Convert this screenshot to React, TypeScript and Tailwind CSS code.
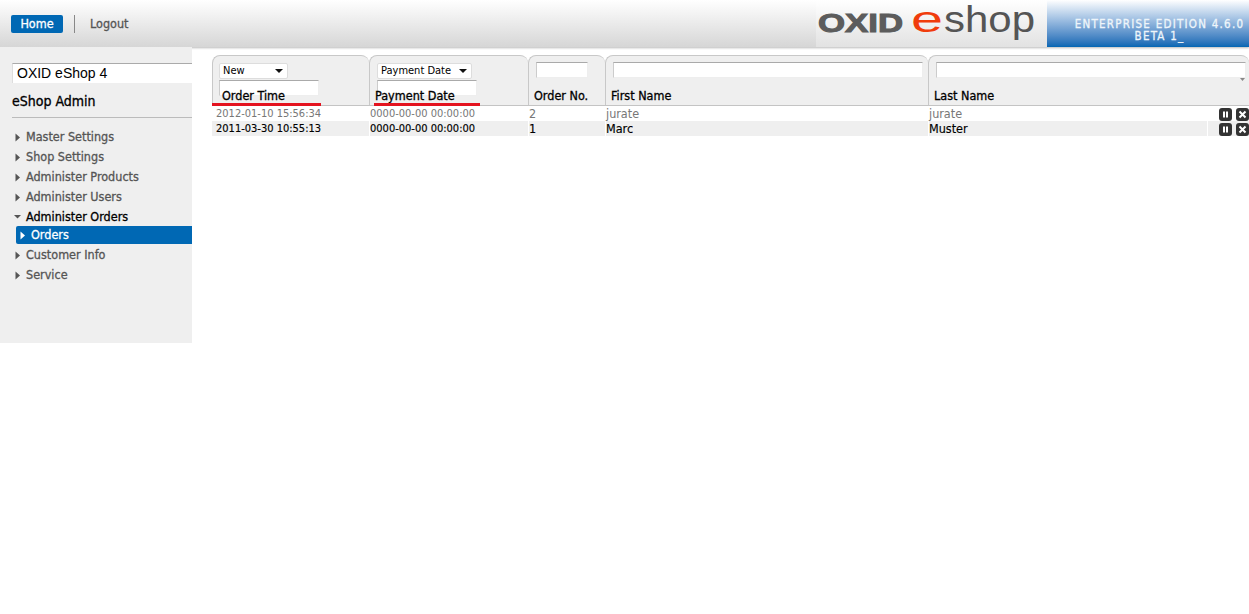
import React from 'react';

const font = "font-['DejaVu_Sans_Condensed','DejaVu_Sans',sans-serif]";
const heavy = '[-webkit-text-stroke:0.3px]';

const menuItems = ['Master Settings', 'Shop Settings', 'Administer Products', 'Administer Users'];
const lowerItems = ['Customer Info', 'Service'];

const Caret = ({ open = false, color = '#555' }: { open?: boolean; color?: string }) => (
  <svg width="7" height="9" viewBox="0 0 7 9" className="shrink-0">
    {open ? <path d="M0 3h7L3.5 6.5z" fill={color} /> : <path d="M1.5 0.5v8L6 4.5z" fill={color} />}
  </svg>
);

const RowButton = ({ kind }: { kind: 'pause' | 'close' }) => (
  <span className="flex h-[13px] w-[13px] items-center justify-center rounded-[3px] bg-[#333]">
    <svg width="9" height="9" viewBox="0 0 9 9">
      {kind === 'pause' ? (
        <path d="M2 1.5h2v6h-2zM5 1.5h2v6h-2z" fill="#fff" />
      ) : (
        <path d="M1.5 1.5l6 6M7.5 1.5l-6 6" stroke="#fff" strokeWidth="2" />
      )}
    </svg>
  </span>
);

const Logo = () => (
  <svg width="222" height="47" viewBox="0 0 222 47" role="img" aria-label="OXID eshop">
    <text x="0" y="32" fontFamily="'Liberation Sans', sans-serif" fontWeight="700" fontSize="25" textLength="85" lengthAdjust="spacingAndGlyphs" fill="#5c5c5c" stroke="#5c5c5c" strokeWidth="1">OXID</text>
    <text x="93" y="32" fontFamily="'Liberation Sans', sans-serif" fontSize="36" textLength="32" lengthAdjust="spacingAndGlyphs" fill="#f03c0c">e</text>
    <text x="126" y="32" fontFamily="'Liberation Sans', sans-serif" fontSize="36" textLength="91" lengthAdjust="spacingAndGlyphs" fill="#555">shop</text>
  </svg>
);

const headCell = 'relative flex h-full flex-col rounded-t-[8px] border-l border-t border-[#c8c8c8] bg-[#efefef]';
const inputCls = 'block h-[16px] border border-[#eee] border-t-[#aaa] border-l-[#ccc] bg-white';
const headLabel = `absolute top-[32px] text-[12.5px] leading-[15px] ${heavy}`;

const Select = ({ label, width }: { label: string; width: string }) => (
  <div className={`flex h-[16px] items-center justify-between rounded-[2px] border border-[#ddd] bg-white pl-[3px] pr-[4px] text-[11px] text-black ${width}`}>
    <span>{label}</span>
    <svg width="8" height="4" viewBox="0 0 8 4"><path d="M0 0h8L4 4z" fill="#111" /></svg>
  </div>
);

const rows = [
  { time: '2012-01-10 15:56:34', pay: '0000-00-00 00:00:00', no: '2', first: 'jurate', last: 'jurate', cls: 'bg-white text-[#777]' },
  { time: '2011-03-30 10:55:13', pay: '0000-00-00 00:00:00', no: '1', first: 'Marc', last: 'Muster', cls: 'bg-[#efefef] text-black [-webkit-text-stroke:0.15px]' },
];

const gridCols = 'grid grid-cols-[157px_159px_77px_323px_279px_42px]';

export default function App() {
  return (
    <div className={`${font} min-h-[614px] bg-white`}>
      {/* Top bar */}
      <header className="flex h-[47px] items-stretch justify-between bg-gradient-to-b from-white to-[#d6d6d6] shadow-[0_1px_2px_#bbb]">
        <nav className="flex items-center pl-[11px]">
          <a className={`flex h-[18px] w-[52px] items-center justify-center rounded-[2px] bg-[#0068b4] pt-[2px] text-[12.5px] text-white ${heavy}`}>Home</a>
          <span className="ml-[11px] h-[18px] w-px bg-[#888]" />
          <a className={`ml-[15px] mt-[2px] text-[12.5px] text-[#555] ${heavy}`}>Logout</a>
        </nav>
        <div className="flex">
          <div className="flex w-[231px] items-center bg-gradient-to-b from-white to-[#e2e2e2] pl-[2px]">
            <Logo />
          </div>
          <div className={`flex w-[202px] flex-col items-center justify-center bg-gradient-to-b from-white to-[#0066b3] pt-[13px] pl-[23px] text-[11.5px] leading-[12px] tracking-[1.25px] text-[#eef5fa] ${heavy}`}>
            <span>ENTERPRISE EDITION 4.6.0</span>
            <span>BETA 1_</span>
          </div>
        </div>
      </header>

      <div className="flex items-start">
        {/* Sidebar */}
        <aside className="h-[296px] w-[192px] shrink-0 bg-[#efefef] pl-[12px] pt-[16px]">
          <div className="flex h-[20px] items-center border-t border-l border-t-[#aaa] border-l-[#ddd] bg-white pl-[4px] font-['Liberation_Sans',sans-serif] text-[14px] text-black">
            OXID eShop 4
          </div>
          <h1 className={`mt-[9px] text-[14px] leading-[18px] text-black ${heavy}`}>eShop Admin</h1>
          <div className="mt-[7px] h-px bg-[#bbb]" />
          <ul className={`mt-[9px] text-[12.5px] leading-[20px] text-[#555] ${heavy}`}>
            {menuItems.map((item) => (
              <li key={item} className="flex h-[20px] items-center gap-[5px] pl-[2px]">
                <Caret />
                {item}
              </li>
            ))}
            <li className="flex h-[19px] items-center gap-[5px] pl-[2px] text-black">
              <Caret open />
              Administer Orders
            </li>
            <li className="mb-[1px] ml-[4px] flex h-[18px] items-center gap-[5px] rounded-l-[2px] bg-[#0068b4] pl-[3px] text-white">
              <Caret color="#fff" />
              Orders
            </li>
            {lowerItems.map((item) => (
              <li key={item} className="flex h-[20px] items-center gap-[5px] pl-[2px]">
                <Caret />
                {item}
              </li>
            ))}
          </ul>
        </aside>

        {/* Orders list */}
        <main className="ml-[20px] mt-[8px] w-[1037px] overflow-hidden">
          <div className="grid h-[51px] grid-cols-[157px_159px_77px_323px_321px] border-b border-[#c4c4c4] text-black">
            <div className={headCell}>
              <div className="ml-[6px] mt-[7px]"><Select label="New" width="w-[69px]" /></div>
              <div className={`${inputCls} ml-[6px] mt-[1px] w-[100px]`} />
              <span className={`${headLabel} left-[9px]`}>Order Time</span>
              <span className="absolute -left-px bottom-[-1px] h-[3px] w-[109px] bg-[#e4131f]" />
            </div>
            <div className={headCell}>
              <div className="ml-[7px] mt-[7px]"><Select label="Payment Date" width="w-[95px]" /></div>
              <div className={`${inputCls} ml-[7px] mt-[1px] w-[100px]`} />
              <span className={`${headLabel} left-[5px]`}>Payment Date</span>
              <span className="absolute left-[4px] bottom-[-1px] h-[3px] w-[106px] bg-[#e4131f]" />
            </div>
            <div className={headCell}>
              <div className={`${inputCls} ml-[7px] mt-[6px] w-[52px]`} />
              <span className={`${headLabel} left-[5px]`}>Order No.</span>
            </div>
            <div className={headCell}>
              <div className={`${inputCls} ml-[7px] mt-[6px] w-[310px]`} />
              <span className={`${headLabel} left-[5px]`}>First Name</span>
            </div>
            <div className={headCell}>
              <div className={`${inputCls} ml-[7px] mt-[6px] w-[310px]`} />
              <span className={`${headLabel} left-[5px]`}>Last Name</span>
              <svg width="5" height="3" viewBox="0 0 5 3" className="absolute right-[4px] top-[22px]"><path d="M0 0h5L2.5 3z" fill="#888" /></svg>
            </div>
          </div>
          {rows.map((row) => (
            <div key={row.no} className={`${gridCols} h-[15px] text-[11px] leading-[16px] ${row.cls}`}>
              <span className="pl-[4px]">{row.time}</span>
              <span className="border-l border-white">{row.pay}</span>
              <span className="border-l border-white text-[12.5px]">{row.no}</span>
              <span className="border-l border-white text-[12.5px]">{row.first}</span>
              <span className="border-l border-white text-[12.5px]">{row.last}</span>
              <span className="flex items-center gap-[4px] border-l border-white pl-[11px]">
                <RowButton kind="pause" />
                <RowButton kind="close" />
              </span>
            </div>
          ))}
        </main>
      </div>
    </div>
  );
}
